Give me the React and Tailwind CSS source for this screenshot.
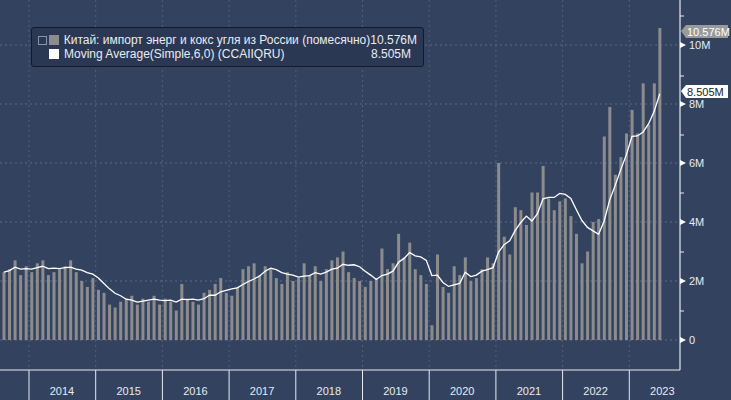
const data=[2.3,2.4,2.7,2.2,2.5,2.3,
2.6,2.7,2.2,2.3,2.4,2.5,2.7,2.3,2.0,1.8,2.1,1.7,
1.6,1.2,1.1,1.3,1.4,1.5,1.2,1.4,1.3,1.5,1.2,1.4,
1.3,1.0,1.9,1.4,1.3,1.2,1.6,1.7,1.9,2.1,1.6,1.5,
1.8,2.4,2.5,2.6,2.2,2.5,2.4,2.1,1.9,2.3,2.0,2.1,
2.6,2.2,2.5,2.0,2.4,2.7,2.8,3.0,2.3,2.1,2.0,1.8,
2.0,2.1,3.1,2.4,2.6,3.6,2.8,3.3,2.4,2.2,1.9,0.5,
2.9,1.8,1.6,2.5,2.2,2.8,2.0,2.1,2.4,2.8,2.6,6.0,
3.5,2.9,4.5,4.4,3.9,5.0,5.0,5.9,4.8,4.4,4.7,4.8,
4.2,3.6,2.6,3.0,4.0,4.1,6.9,7.9,5.6,6.2,7.0,7.8,
7.0,8.7,7.3,8.7,10.576];
const step=66.7/12, x0=29-6.5*step+8;
const Y=v=>340-v*29.5;
const ma=data.map((_,i)=>{const s=data.slice(Math.max(0,i-5),i+1);return s.reduce((a,b)=>a+b,0)/s.length;});
const years=[2014,2015,2016,2017,2018,2019,2020,2021,2022,2023];
const bx=i=>29+i*66.7;
export default function App(){
return(<div className="relative w-[731px] h-[400px] bg-[#33425f] overflow-hidden" style={{fontFamily:'"Liberation Sans",Arial,sans-serif'}}>
<svg width="731" height="400" className="absolute inset-0">
{[45,104,163,222,281,340].map(y=><line key={y} x1="0" x2="680" y1={y} y2={y} stroke="#5a6a88" strokeDasharray="2 3" strokeWidth="1"/>)}
{years.map((y,i)=><line key={y} x1={bx(i)} x2={bx(i)} y1="0" y2="370" stroke="#4f5f7e" strokeDasharray="2 3"/>)}
{data.map((v,i)=><rect key={i} x={x0+i*step+1.6} y={Y(v)} width="3" height={v*29.5} fill="#8c8c8c"/>)}
<polyline points={ma.map((v,i)=>`${x0+i*step+3},${Y(v)}`).join(' ')} fill="none" stroke="#fff" strokeWidth="1.3"/>
<line x1="680" x2="680" y1="0" y2="370" stroke="#e8ecf2" strokeWidth="1.2"/>
<line x1="0" x2="680" y1="370" y2="370" stroke="#e8ecf2" strokeWidth="1.2"/>
{[16,76,135,193,252,311].map(y=><line key={y} x1="680" x2="684" y1={y} y2={y} stroke="#e8ecf2"/>)}
{years.map((y,i)=><line key={y} x1={bx(i)} x2={bx(i)} y1="370" y2="400" stroke="#e8ecf2"/>)}
{[[45,'10M'],[104,'8M'],[163,'6M'],[222,'4M'],[281,'2M'],[340,'0']].map(([y,t])=><g key={t}><polygon points={`680,${y-3} 686,${y} 680,${y+3}`} fill="#fff"/><text x="689" y={y+4} fill="#e8ecf2" fontSize="11">{t}</text></g>)}
<polygon points="681,31 686,25 728,25 728,38 686,38" fill="#9a9a9a"/>
<text x="687" y="35.5" fill="#fff" fontSize="11">10.576M</text>
<polygon points="681,91 686,85 728,85 728,98 686,98" fill="#fff"/>
<text x="687" y="95.5" fill="#222" fontSize="11">8.505M</text>
{years.map((y,i)=><text key={y} x={bx(i)+33} y="395" textAnchor="middle" fill="#e8ecf2" fontSize="11">{y}</text>)}
</svg>
<div className="absolute left-[31px] top-[27px] w-[393px] h-[40px] bg-[#2b3853] border border-[#121a2b] rounded-[3px] px-[6px] py-[5px] text-[12px] leading-[14px] text-[#e8ecf2]">
<div className="flex items-center"><span className="w-[9px] h-[9px] border border-[#8a94a8] mr-[2px]"/><span className="w-[10px] h-[10px] bg-[#8c8c8c] mr-[5px]"/><span className="flex-1 whitespace-nowrap">Китай: импорт энерг и кокс угля из России (помесячно)</span><span>10.576M</span></div>
<div className="flex items-center"><span className="w-[11px]"/><span className="w-[10px] h-[10px] bg-white mr-[5px]"/><span className="flex-1">Moving Average(Simple,6,0) (CCAIIQRU)</span><span className="pr-[6px]">8.505M</span></div>
</div>
</div>);}
